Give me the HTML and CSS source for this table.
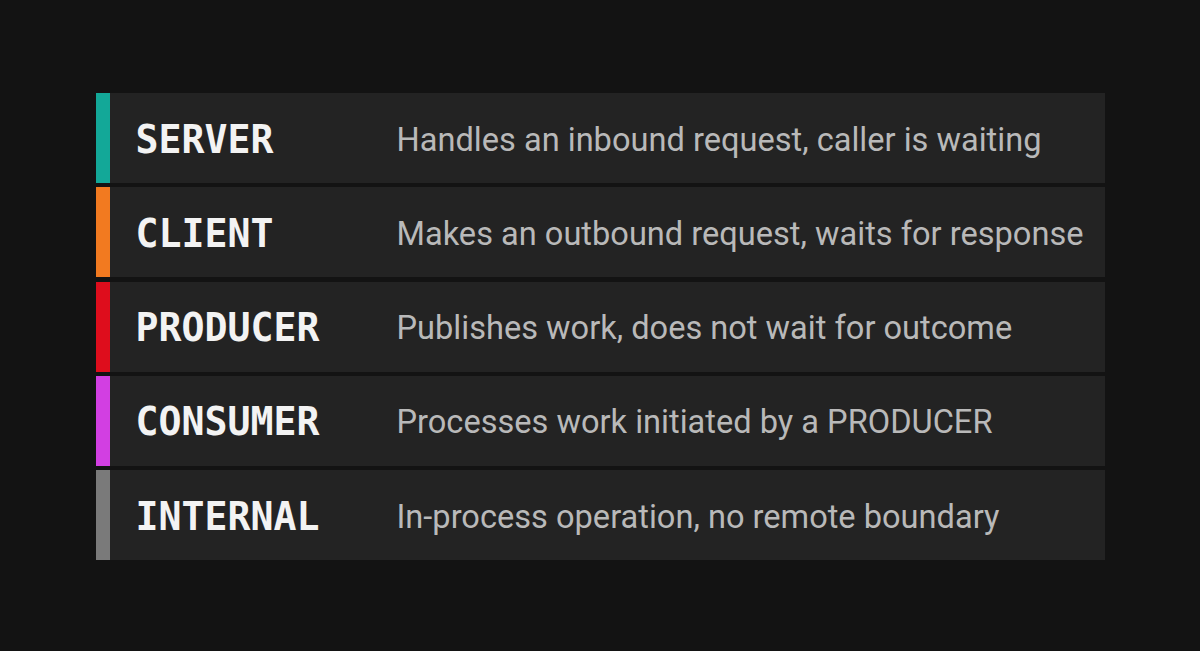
FILE: index.html
```html
<!DOCTYPE html>
<html>
<head>
<meta charset="utf-8">
<link rel="stylesheet" href="styles.css">
</head>
<body>
<div class="page">
  <div class="table">
    <div class="row"><span class="bar server"></span><span class="kind">SERVER</span><span class="desc">Handles an inbound request, caller is waiting</span></div>
    <div class="row"><span class="bar client"></span><span class="kind">CLIENT</span><span class="desc">Makes an outbound request, waits for response</span></div>
    <div class="row"><span class="bar producer"></span><span class="kind">PRODUCER</span><span class="desc">Publishes work, does not wait for outcome</span></div>
    <div class="row"><span class="bar consumer"></span><span class="kind">CONSUMER</span><span class="desc">Processes work initiated by a PRODUCER</span></div>
    <div class="row"><span class="bar internal"></span><span class="kind">INTERNAL</span><span class="desc">In-process operation, no remote boundary</span></div>
  </div>
</div>
</body>
</html>
```
FILE: styles.css
```css
html, body {
  margin: 0;
  padding: 0;
  background: #131313;
}
.page {
  width: 1200px;
  height: 651px;
  display: flex;
  justify-content: center;
  align-items: flex-start;
  padding-top: 93px;
  box-sizing: border-box;
}
.table {
  width: 1009px;
  display: grid;
  grid-template-rows: repeat(5, 90px);
  row-gap: 4.25px;
}
.row {
  background: #232323;
  display: flex;
  align-items: center;
}
.bar {
  width: 14px;
  align-self: stretch;
  flex: none;
}
.server { background: #13a898; }
.client { background: #f27a20; }
.producer { background: #de0d1c; }
.consumer { background: #d23fe2; }
.internal { background: #7a7a7a; }
.kind {
  width: 261px;
  margin-left: 26px;
  flex: none;
  font-family: "DejaVu Sans Mono", monospace;
  font-weight: bold;
  font-size: 38.2px;
  color: #f3f3f3;
  padding-top: 3px;
}
.desc {
  font-family: Roboto, sans-serif;
  font-size: 32.6px;
  color: #b9b9b9;
  padding-top: 3px;
}
```
